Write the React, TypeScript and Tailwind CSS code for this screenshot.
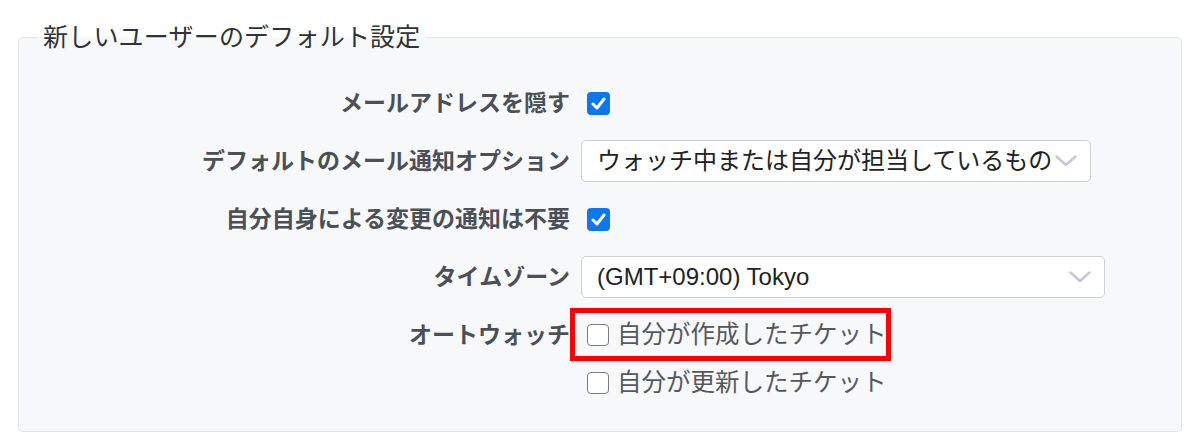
import type { ReactNode } from 'react';

const FONT = { fontFamily: '"Liberation Sans", "Noto Sans CJK JP", sans-serif' };

const Chevron = () => (
  <svg width="22" height="12" viewBox="0 0 22 12" fill="none" className="shrink-0">
    <path d="M1.5 1.5 L11 10 L20.5 1.5" stroke="#c6c6d8" strokeWidth="2.5" strokeLinecap="round" strokeLinejoin="round" />
  </svg>
);

const Checked = () => (
  <span className="ml-[6px] flex h-[23px] w-[23px] items-center justify-center rounded-[4px] bg-[#0d77f2]">
    <svg width="15" height="13" viewBox="0 0 15 13" fill="none">
      <path d="M2 7 L6 11 L13 2" stroke="white" strokeWidth="3" strokeLinecap="round" strokeLinejoin="round" />
    </svg>
  </span>
);

const Unchecked = () => (
  <span className="h-[22px] w-[22px] shrink-0 rounded-[4px] border-[1.5px] border-[#7a7a7a] bg-white" />
);

const FakeSelect = ({ value, width }: { value: string; width: string }) => (
  <div
    className={`flex h-[42px] ${width} items-center justify-between rounded-[5px] border border-[#cdd1d6] bg-white pl-[15px] pr-[13px] text-[24px] text-[#222]`}
  >
    <span className="whitespace-nowrap">{value}</span>
    <Chevron />
  </div>
);

const Row = ({ label, children }: { label: string; children: ReactNode }) => (
  <div className="flex items-start gap-[11px]">
    <div className="flex h-[42px] w-[532px] items-center justify-end whitespace-nowrap text-[23px] font-bold text-[#4b5056]">
      {label}
    </div>
    <div>{children}</div>
  </div>
);

const WatchOption = ({ label }: { label: string }) => (
  <div className="flex h-[42px] items-center gap-[8px] pl-[6px] text-[24.5px] text-[#55595e]">
    <Unchecked />
    <span className="whitespace-nowrap">{label}</span>
  </div>
);

export default function App() {
  return (
    <div className="min-h-[446px] bg-white px-[18px] pt-[22px]" style={FONT}>
      <fieldset className="h-[410px] rounded-[5px] border border-[#e2e4e7] bg-[#f7f8fa] px-[19px] pb-[27px] pt-[30px]">
        <legend className="px-[5px] text-[25px] tracking-[0.2px] leading-[30px] text-[#2f3337]">新しいユーザーのデフォルト設定</legend>

        <div className="flex flex-col gap-[16px]">
          <Row label="メールアドレスを隠す">
            <div className="flex h-[42px] items-center">
              <Checked />
            </div>
          </Row>

          <Row label="デフォルトのメール通知オプション">
            <FakeSelect value="ウォッチ中または自分が担当しているもの" width="w-[510px]" />
          </Row>

          <Row label="自分自身による変更の通知は不要">
            <div className="flex h-[42px] items-center">
              <Checked />
            </div>
          </Row>

          <Row label="タイムゾーン">
            <FakeSelect value="(GMT+09:00) Tokyo" width="w-[524px]" />
          </Row>

          <Row label="オートウォッチ">
            <div className="flex flex-col gap-[6px]">
              <div className="relative">
                <WatchOption label="自分が作成したチケット" />
                {/* annotation box */}
                <div className="pointer-events-none absolute left-[-11px] top-[-6px] h-[53px] w-[321px] border-[5px] border-[#ff0000]" />
              </div>
              <WatchOption label="自分が更新したチケット" />
            </div>
          </Row>
        </div>
      </fieldset>
    </div>
  );
}
